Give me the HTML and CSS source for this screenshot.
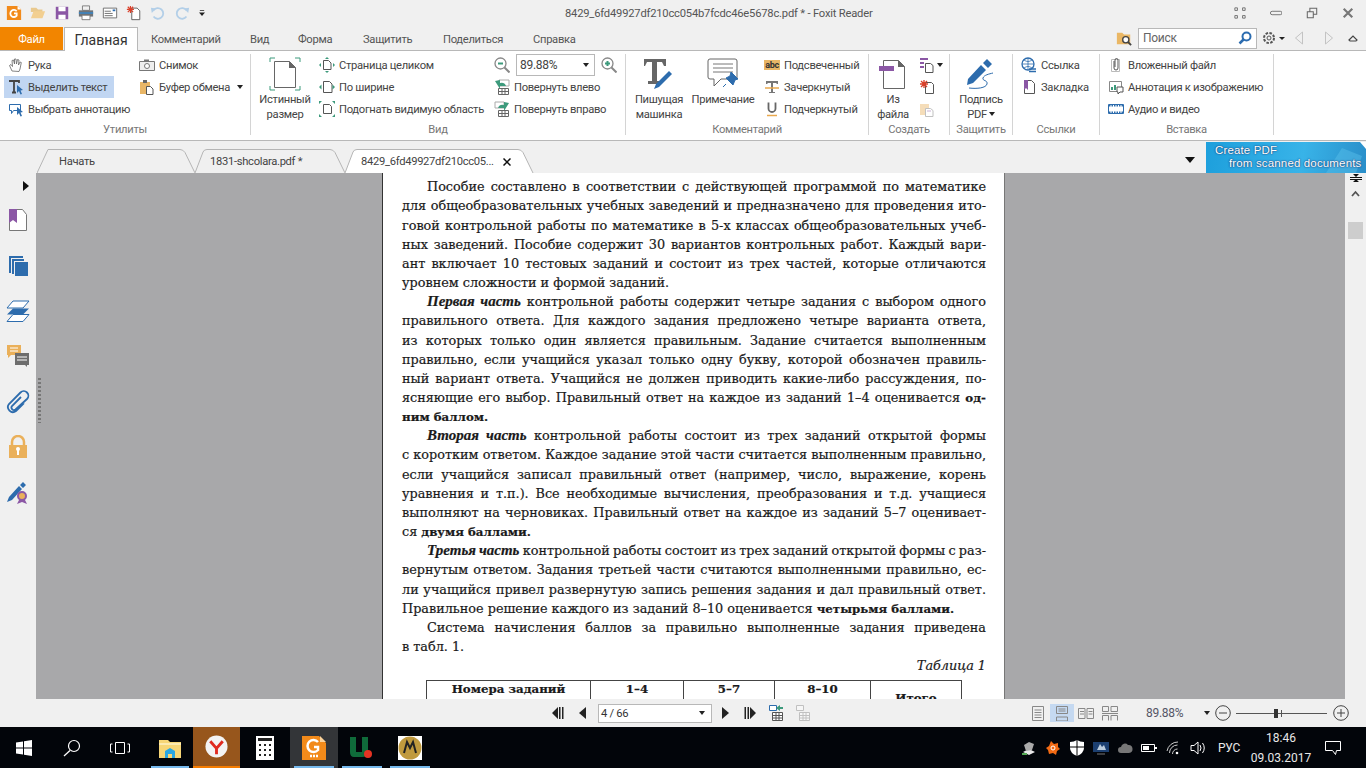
FILE: index.html
```html
<!DOCTYPE html>
<html lang="ru">
<head>
<meta charset="utf-8">
<title>Foxit Reader</title>
<link rel="stylesheet" href="styles.css">
</head>
<body>
<div class="app">
  <header class="titlebar">
    <div class="qat">
      <svg class="qi" viewBox="0 0 18 18"><path d="M1 1h12l4 4v12H1z" fill="#f28a1a"/><path d="M13 1l4 4h-4z" fill="#fff"/><path d="M12 7a4 4 0 1 0 0 5V9.500H9" fill="none" stroke="#fff" stroke-width="2"/></svg>
      <svg class="qi" viewBox="0 0 18 18"><path d="M1 3h6l2 2h5v3H1z" fill="#e9c98e"/><path d="M1 15l3-8h13l-3 8z" fill="#f2cf91"/></svg>
      <svg class="qi" viewBox="0 0 18 18"><path d="M2 2h14v14H2z" fill="#8b57a5"/><path d="M5 2h8v5H5zM5 11h8v5H5z" fill="#fff"/></svg>
      <svg class="qi" viewBox="0 0 18 18"><path d="M5 1h8v5H5z" fill="none" stroke="#777"/><path d="M1 6h16v7H1z" fill="#6f7377"/><path d="M1 8h16v2H1z" fill="#3f83bd"/><path d="M4.500 11.500h9v5h-9z" fill="#fff" stroke="#777"/></svg>
      <svg class="qi" viewBox="0 0 18 18"><path d="M1.500 3.500h15v11h-15z" fill="#fff" stroke="#666"/><path d="M3 7h7M3 9.500h9M3 12h9" stroke="#666"/><path d="M12 5h3v2h-3z" fill="#2f6fb0"/></svg>
      <svg class="qi" viewBox="0 0 18 18"><path d="M6.500 3.500h6l3 3v10h-9z" fill="#fff" stroke="#555"/><path d="M5 1v8M1 5h8M2 2l6 6M8 2L2 8" stroke="#d9412b" stroke-width="1.300"/></svg>
      <svg class="qi" viewBox="0 0 18 18"><path d="M4 6a6 6 0 1 1 0 7" fill="none" stroke="#b3cfe8" stroke-width="2"/><path d="M1 3l6 1-5 5z" fill="#b3cfe8"/></svg>
      <svg class="qi" viewBox="0 0 18 18"><path d="M14 6a6 6 0 1 0 0 7" fill="none" stroke="#b3cfe8" stroke-width="2"/><path d="M17 3l-6 1 5 5z" fill="#b3cfe8"/></svg>
      <svg class="qi-small" viewBox="0 0 7 7"><path d="M1 0h5v1H1zM0 3h7L3.500 7z" fill="#222"/></svg>
    </div>
    <div class="doc-title">8429_6fd49927df210cc054b7fcdc46e5678c.pdf * - Foxit Reader</div>
    <div class="winbtns">
      <svg class="wb" viewBox="0 0 14 14"><path d="M1 1h3v3H1zM10 1h3v3h-3zM1 10h3v3H1zM10 10h3v3h-3z" fill="none" stroke="#666"/></svg>
      <svg class="wb" viewBox="0 0 14 14"><path d="M2.500 5h9.500a1 1 0 0 1 0 4H2.500a1 1 0 0 1 0-4z" fill="none" stroke="#666"/></svg>
      <svg class="wb" viewBox="0 0 14 14"><path d="M1.500 5.500h7v7h-7zM4.500 5V1.500h8v7H9" fill="none" stroke="#666" stroke-width="1.200"/></svg>
      <svg class="wb" viewBox="0 0 14 14"><path d="M2 2l10 10M12 2L2 12" stroke="#777" stroke-width="2.500"/></svg>
    </div>
  </header>

  <nav class="menubar">
    <div class="file-tab">Файл</div>
    <div class="home-tab">Главная</div>
    <div class="menu-item w1">Комментарий</div>
    <div class="menu-item w2">Вид</div>
    <div class="menu-item w3">Форма</div>
    <div class="menu-item w4">Защитить</div>
    <div class="menu-item w5">Поделиться</div>
    <div class="menu-item w6">Справка</div>
    <div class="menu-right">
      <svg class="mi" viewBox="0 0 18 18"><path d="M1 3h6l2 2h7v11H1z" fill="#eab765"/><circle cx="11" cy="11" r="3.500" fill="#fff" stroke="#444" stroke-width="1.500"/><path d="M13.500 13.500l3.500 3.500" stroke="#444" stroke-width="2"/></svg>
      <div class="search"><span>Поиск</span><svg class="search-ic" viewBox="0 0 14 14"><circle cx="8.500" cy="5.500" r="4" fill="none" stroke="#2b6cb0" stroke-width="2"/><path d="M5.500 8.500L1.500 12.500" stroke="#2b6cb0" stroke-width="2.500"/></svg></div>
      <svg class="gear" viewBox="0 0 24 14"><circle cx="7" cy="7" r="5" fill="none" stroke="#555" stroke-dasharray="2.500 1.400" stroke-width="2"/><circle cx="7" cy="7" r="2" fill="none" stroke="#555"/><path d="M17 6h6l-3 3z" fill="#222"/></svg>
      <svg class="arrow-nav" viewBox="0 0 10 14"><path d="M8.500 1L1.500 7l7 6z" fill="none" stroke="#c3c3c3"/></svg>
      <svg class="arrow-nav" viewBox="0 0 10 14"><path d="M1.500 1l7 6-7 6z" fill="none" stroke="#c3c3c3"/></svg>
      <svg class="chev" viewBox="0 0 10 8"><path d="M1 6l4-4 4 4-1 1H2z" fill="none" stroke="#444" stroke-width="1.200"/></svg>
    </div>
  </nav>

  <section class="ribbon">
    <div class="group g-util">
      <div class="group-body">
        <div class="col c-util1">
          <div class="row"><svg class="ic" viewBox="0 0 16 16"><path d="M4 14L1.500 8.500l1.500-1 1.500 2L4 3.500l1.500-.5L6.500 7V2h1.500l.5 5 1-4.500 1.500.5-.5 5 1.500-3 1.300.5L12 12l-1 2.500z" fill="#fff" stroke="#666" stroke-width=".8"/></svg><span>Рука</span></div>
          <div class="row row-on"><svg class="ic" viewBox="0 0 16 16"><path d="M1 2h10v2M6 2v11M4 13.500h4" fill="none" stroke="#444" stroke-width="1.800"/><path d="M9 6l6 5-2.500.5L14 15l-1.500.5-1.500-3.500-2 2z" fill="#2d6cad"/></svg><span>Выделить текст</span></div>
          <div class="row"><svg class="ic" viewBox="0 0 16 16"><path d="M1.500 3.500h11v6h-7l-2 3v-3h-2z" fill="none" stroke="#2d6cad"/><path d="M9 6l6 5-2.500.5L14 15l-1.500.5-1.500-3.500-2 2z" fill="#2d6cad"/></svg><span>Выбрать аннотацию</span></div>
        </div>
        <div class="col">
          <div class="row"><svg class="ic" viewBox="0 0 16 16"><path d="M.5 4.500h15v9H.5z" fill="#eee" stroke="#777"/><path d="M5 2.500h5v2H5z" fill="#777"/><circle cx="8" cy="9" r="2.500" fill="#fff" stroke="#777"/></svg><span>Снимок</span></div>
          <div class="row"><svg class="ic" viewBox="0 0 16 16"><path d="M1 3h10v12H1z" fill="#e9b666"/><path d="M4 1h4v3H4z" fill="#666"/><path d="M7.500 7.500h4l2.500 2.500v5.500H7.500z" fill="#fff" stroke="#555"/></svg><span>Буфер обмена</span><i class="caret caret-gap"></i></div>
        </div>
      </div>
      <div class="group-label">Утилиты</div>
    </div>

    <div class="group g-view">
      <div class="group-body">
        <div class="big b-true">
          <svg class="big-ic" viewBox="0 0 32 34"><path d="M1 5V1h5M26 1h5v4M1 29v4h5M26 33h5v-4" fill="none" stroke="#3d9a7c"/><path d="M5.500 4.500h15l6 6v20h-21z" fill="#fff" stroke="#666"/><path d="M20 4l7 7h-7z" fill="#666"/></svg>
          <span>Истинный</span><span>размер</span>
        </div>
        <div class="col c-fit">
          <div class="row"><svg class="ic" viewBox="0 0 16 16"><path d="M4.500 3.500h5l2.500 2.500v6.500H4.500z" fill="#fff" stroke="#555"/><path d="M8 0l2 2H6zM8 16l-2-2h4zM0 8l2-2v4zM16 8l-2 2V6z" fill="#3d9a7c"/></svg><span>Страница целиком</span></div>
          <div class="row"><svg class="ic" viewBox="0 0 16 16"><path d="M4.500 2.500h6l2.500 2.500v8.500H4.500z" fill="#fff" stroke="#555"/><path d="M0 8l2.500-2.500v5zM16 8l-2.500 2.500v-5z" fill="#3d9a7c"/></svg><span>По ширине</span></div>
          <div class="row"><svg class="ic" viewBox="0 0 16 16"><path d="M4.500 3.500h6l2 2v7h-8z" fill="#fff" stroke="#555"/><path d="M0 0h3L0 3zM16 0h-3l3 3zM0 16h3l-3-3zM16 16h-3l3-3z" fill="#3d9a7c"/></svg><span>Подогнать видимую область</span></div>
        </div>
        <div class="col">
          <div class="row zoomrow">
            <svg class="ic" viewBox="0 0 16 16"><circle cx="6.500" cy="6.500" r="5.500" fill="#fff" stroke="#888" stroke-width="1.300"/><path d="M4 6.500h5" stroke="#3d9a7c" stroke-width="2"/><path d="M10.500 10.500l5 5" stroke="#888" stroke-width="2"/></svg>
            <div class="combo"><span>89.88%</span><i class="caret"></i></div>
            <svg class="ic" viewBox="0 0 16 16"><circle cx="6.500" cy="6.500" r="5.500" fill="#fff" stroke="#888" stroke-width="1.300"/><path d="M4 6.500h5M6.500 4v5" stroke="#3d9a7c" stroke-width="2"/><path d="M10.500 10.500l5 5" stroke="#888" stroke-width="2"/></svg>
          </div>
          <div class="row"><svg class="ic" viewBox="0 0 16 16"><path d="M5 1h10v6H5z" fill="#fff" stroke="#aaa"/><path d="M1 2l5-1v3a5 5 0 0 1 6 3H6v3z" fill="#3d9a7c"/><path d="M4.500 9.500h10v6h-10zM4.500 12.500h10M8 9.500v6M11 9.500v6" fill="#fff" stroke="#666"/></svg><span>Повернуть влево</span></div>
          <div class="row"><svg class="ic" viewBox="0 0 16 16"><path d="M1 1h9v6H1z" fill="#fff" stroke="#aaa"/><path d="M15 2l-5-1v3a5 5 0 0 0-6 3h6v3z" fill="#3d9a7c"/><path d="M4.500 9.500h10v6h-10zM4.500 12.500h10M8 9.500v6M11 9.500v6" fill="#fff" stroke="#666"/></svg><span>Повернуть вправо</span></div>
        </div>
      </div>
      <div class="group-label">Вид</div>
    </div>

    <div class="group g-comm">
      <div class="group-body">
        <div class="big b-type">
          <svg class="big-ic" viewBox="0 0 32 34"><path d="M1 2h22v7h-2l-2-4h-5v19h4v3H5v-3h4V5H4L2 9H1z" fill="#666"/><path d="M11 32l2-5L26 14l3 3-13 13z" fill="#2d6cad"/></svg>
          <span>Пишущая</span><span>машинка</span>
        </div>
        <div class="big b-note">
          <svg class="big-ic" viewBox="0 0 32 34"><path d="M3 2h25a2 2 0 0 1 2 2v18h-16l-7 7v-7H3a2 2 0 0 1-2-2V4a2 2 0 0 1 2-2z" fill="#fff" stroke="#666"/><path d="M6 7h20M6 11h20M6 15h20" stroke="#777"/><path d="M24 15l7 7-3 1-2 5-7-7 4-2zM19 27l-3 3" fill="#2d6cad" stroke="#2d6cad"/></svg>
          <span>Примечание</span>
        </div>
        <div class="col">
          <div class="row"><span class="abc">abc</span><span>Подсвеченный</span></div>
          <div class="row"><svg class="ic" viewBox="0 0 16 16"><path d="M2 2h12v3h-1l-1-1H9v9h2v1H5v-1h2V4H4L3 5H2z" fill="#777"/><path d="M1 9h14" stroke="#e9a84e" stroke-width="1.500"/></svg><span>Зачеркнутый</span></div>
          <div class="row"><svg class="ic" viewBox="0 0 16 16"><path d="M4.500 1.500v6a3.500 3.500 0 0 0 7 0v-6" fill="none" stroke="#666" stroke-width="1.800"/><path d="M3 14.500h10" stroke="#e9a84e" stroke-width="1.500"/></svg><span>Подчеркнутый</span></div>
        </div>
      </div>
      <div class="group-label">Комментарий</div>
    </div>

    <div class="group g-make">
      <div class="group-body">
        <div class="big b-file">
          <svg class="big-ic" viewBox="0 0 32 34"><path d="M6.500 3.500h15l6 6v22h-21z" fill="#fff" stroke="#666"/><path d="M21 3l7 7h-7z" fill="#666"/><path d="M2 9h15v5H2z" fill="#8b57a5"/></svg>
          <span>Из</span><span>файла</span>
        </div>
        <div class="col c-make">
          <div class="row"><svg class="ic" viewBox="0 0 16 16"><path d="M6.500 6.500h5l2.500 2v7H6.500z" fill="#fff" stroke="#555"/><path d="M1 1h8v2H1zM1 5h4v2H1zM1 9h4v2H1z" fill="#8b57a5"/></svg><i class="caret caret-small"></i></div>
          <div class="row"><svg class="ic" viewBox="0 0 16 16"><path d="M6.500 3.500h6l2 2v9h-8z" fill="#fff" stroke="#555"/><path d="M5 1v8M1 5h8M2 2l6 6M8 2L2 8" stroke="#d9412b" stroke-width="1.300"/></svg></div>
          <div class="row"><svg class="ic faded" viewBox="0 0 16 16"><path d="M1 3h9v11H1z" fill="#e9b666"/><path d="M6.500 7.500h5l2.500 2v6H6.500z" fill="#fff" stroke="#777"/><path d="M8 10h4" stroke="#8b57a5"/></svg></div>
        </div>
      </div>
      <div class="group-label">Создать</div>
    </div>

    <div class="group g-prot">
      <div class="group-body">
        <div class="big b-sign">
          <svg class="big-ic" viewBox="0 0 32 34"><path d="M3 22L16 8l5 5L8 26l-6 2zM18 6l4-4 5 5-4 4z" fill="#2d6cad"/><path d="M4 31c8 1 17 0 18-4s-5-3-4-6 6-4 10-5" fill="none" stroke="#2d6cad"/></svg>
          <span>Подпись</span><span>PDF<i class="caret caret-in"></i></span>
        </div>
      </div>
      <div class="group-label">Защитить</div>
    </div>

    <div class="group g-link">
      <div class="group-body">
        <div class="col c-pad">
          <div class="row"><svg class="ic" viewBox="0 0 16 16"><circle cx="7" cy="7" r="6" fill="#fff" stroke="#2d6cad" stroke-width="1.300"/><path d="M1 7h12M7 1v12M3 3c3 2 5 2 8 0M3 11c3-2 5-2 8 0" fill="none" stroke="#2d6cad" stroke-width=".8"/><path d="M8 12h7M8 14.500h7" stroke="#2d6cad" stroke-width="1.500"/></svg><span>Ссылка</span></div>
          <div class="row"><svg class="ic" viewBox="0 0 16 16"><path d="M3.500 1.500h7l3 3v10h-10z" fill="#fff" stroke="#555"/><path d="M3 1h4v10l-2-2-2 2z" fill="#8b57a5"/></svg><span>Закладка</span></div>
        </div>
      </div>
      <div class="group-label">Ссылки</div>
    </div>

    <div class="group g-ins">
      <div class="group-body">
        <div class="col c-pad">
          <div class="row"><svg class="ic" viewBox="0 0 16 16"><path d="M3.500 2.500h8v12h-8z" fill="#fff" stroke="#bbb"/><path d="M6 4v7a2 2 0 0 0 4 0V3a1.500 1.500 0 0 0-3 0v7" fill="none" stroke="#555"/></svg><span>Вложенный файл</span></div>
          <div class="row"><svg class="ic" viewBox="0 0 16 16"><path d="M1.500 2.500h12v10h-12z" fill="#fff" stroke="#888"/><path d="M3 11V8h2v3zM6 11V6h2v5z" fill="#3d9a7c"/><path d="M9 8h6v5h-3l-2 2v-2H9z" fill="#fff" stroke="#555"/></svg><span>Аннотация к изображению</span></div>
          <div class="row"><svg class="ic" viewBox="0 0 16 16"><path d="M.5 3.500h15v9H.5z" fill="#fff" stroke="#2d6cad"/><path d="M1 4.500h14M1 11.500h14" stroke="#2d6cad" stroke-width="2" stroke-dasharray="1.500 1"/></svg><span>Аудио и видео</span></div>
        </div>
      </div>
      <div class="group-label">Вставка</div>
    </div>
  </section>

  <div class="tabstrip">
    <div class="doc-tab t1">
      <svg class="tab-shape" viewBox="0 0 158 24"><path d="M0 24L11 .5h132q3 0 5 3L158 24" fill="#f0f0f0" stroke="#b5b5b5"/></svg>
      <span class="tab-text">Начать</span>
    </div>
    <div class="doc-tab t2">
      <svg class="tab-shape" viewBox="0 0 150 24"><path d="M0 24L8 3q1-2.500 4-2.500h123q3 0 5 3L150 24" fill="#f0f0f0" stroke="#b5b5b5"/></svg>
      <span class="tab-text">1831-shcolara.pdf *</span>
    </div>
    <div class="doc-tab t3">
      <svg class="tab-shape" viewBox="0 0 190 24"><path d="M0 24L8 3q1-2.500 4-2.500h161q3 0 5 3L188 24" fill="#fff" stroke="#b5b5b5"/></svg>
      <span class="tab-text">8429_6fd49927df210cc05...</span>
      <svg class="tab-x" viewBox="0 0 8 8"><path d="M.5.5l7 7M7.500.5l-7 7" stroke="#111" stroke-width="1.500"/></svg>
    </div>
    <svg class="strip-caret" viewBox="0 0 10 6"><path d="M0 0h10L5 6z" fill="#111"/></svg>
    <div class="ad">
      <svg class="ad-art" viewBox="0 0 160 31"><path d="M120 31L136 6l20 8-6 17z" fill="#5cc0ea" opacity=".45"/><path d="M154 0h6v7z" fill="#fff"/></svg>
      <span class="ad-a">Create PDF</span>
      <span class="ad-b">from scanned documents</span>
    </div>
  </div>

  <main class="workspace">
    <aside class="sidebar">
      <svg class="side-arrow" viewBox="0 0 6 10"><path d="M0 0l6 5-6 5z" fill="#111"/></svg>
      <svg class="side-ic" viewBox="0 0 20 24"><path d="M1.500 1.500h13l4 5v16h-17z" fill="#fff" stroke="#777"/><path d="M1 1h8v14l-4-3-4 3z" fill="#8b57a5"/></svg>
      <svg class="side-ic" viewBox="0 0 20 24"><path d="M1 3h14v2H3v15H1z" fill="#2d6cad"/><path d="M4 6h12v2H6v13H4z" fill="#2d6cad"/><path d="M7 9h13v14H7z" fill="#2d6cad"/></svg>
      <svg class="side-ic" viewBox="0 0 24 24"><path d="M7 2h16l-6 7H1z" fill="#fff" stroke="#2d6cad"/><path d="M7 9.500h16l-6 6H1z" fill="#2d6cad"/><path d="M7 15.500h16l-6 7H1z" fill="#fff" stroke="#2d6cad"/></svg>
      <svg class="side-ic" viewBox="0 0 24 24"><path d="M1 1h14v10H5l-3 3v-3H1z" fill="#eab05a"/><path d="M4 4h8M4 7h8" stroke="#fff"/><path d="M9 9h14v12h-2v2l-2-2H9z" fill="#6d6d6d"/><path d="M11 13h10M11 16h10" stroke="#fff"/></svg>
      <svg class="side-ic" viewBox="0 0 24 24"><path d="M15 7L6 16a2.500 2.500 0 0 0 3.500 3.500L21 9a4.500 4.500 0 0 0-6.500-6.500L3 14a5 5 0 0 0 7 7l8-8" fill="none" stroke="#2d6cad" stroke-width="1.800"/></svg>
      <svg class="side-ic" viewBox="0 0 20 24"><path d="M4 11V7a6 6 0 0 1 12 0v4" fill="none" stroke="#eab05a" stroke-width="2.500"/><path d="M1 10h18v13H1z" fill="#eab05a"/><path d="M9 14h2v6H9z" fill="#fff"/><circle cx="10" cy="14" r="2" fill="#fff"/></svg>
      <svg class="side-ic" viewBox="0 0 24 24"><path d="M1 21l2-5L13 5l3 3L6 19zM14 4l3-3 3 3-3 3z" fill="#2d6cad"/><circle cx="16" cy="15" r="4" fill="#eab05a" stroke="#8b57a5" stroke-width="2"/><path d="M13 19l-2 4 5-2 5 2-2-4" fill="#8b57a5"/></svg>
    </aside>
    <div class="viewer">
      <span class="splitter"></span>
      <article class="page">
        <div class="ln ind">Пособие составлено в соответствии с действующей программой по математике</div>
        <div class="ln">для общеобразовательных учебных заведений и предназначено для проведения ито-</div>
        <div class="ln">говой контрольной работы по математике в 5-х классах общеобразовательных учеб-</div>
        <div class="ln">ных заведений. Пособие содержит 30 вариантов контрольных работ. Каждый вари-</div>
        <div class="ln">ант включает 10 тестовых заданий и состоит из трех частей, которые отличаются</div>
        <div class="ln end">уровнем сложности и формой заданий.</div>
        <div class="ln ind"><b class="bi">Первая часть</b> контрольной работы содержит четыре задания с выбором одного</div>
        <div class="ln">правильного ответа. Для каждого задания предложено четыре варианта ответа,</div>
        <div class="ln">из которых только один является правильным. Задание считается выполненным</div>
        <div class="ln">правильно, если учащийся указал только одну букву, которой обозначен правиль-</div>
        <div class="ln">ный вариант ответа. Учащийся не должен приводить какие-либо рассуждения, по-</div>
        <div class="ln">ясняющие его выбор. Правильный ответ на каждое из заданий 1–4 оценивается <b>од-</b></div>
        <div class="ln end"><b>ним баллом.</b></div>
        <div class="ln ind"><b class="bi">Вторая часть</b> контрольной работы состоит из трех заданий открытой формы</div>
        <div class="ln">с коротким ответом. Каждое задание этой части считается выполненным правильно,</div>
        <div class="ln">если учащийся записал правильный ответ (например, число, выражение, корень</div>
        <div class="ln">уравнения и т.п.). Все необходимые вычисления, преобразования и т.д. учащиеся</div>
        <div class="ln">выполняют на черновиках. Правильный ответ на каждое из заданий 5–7 оценивает-</div>
        <div class="ln end">ся <b>двумя баллами.</b></div>
        <div class="ln ind tight"><b class="bi">Третья часть</b> контрольной работы состоит из трех заданий открытой формы с раз-</div>
        <div class="ln">вернутым ответом. Задания третьей части считаются выполненными правильно, ес-</div>
        <div class="ln">ли учащийся привел развернутую запись решения задания и дал правильный ответ.</div>
        <div class="ln end">Правильное решение каждого из заданий 8–10 оценивается <b>четырьмя баллами.</b></div>
        <div class="ln ind">Система начисления баллов за правильно выполненные задания приведена</div>
        <div class="ln end">в табл. 1.</div>
        <div class="ln caption"><i>Таблица 1</i></div>
        <div class="tbl">
          <div class="cell c-a"><b>Номера заданий</b></div>
          <div class="cell c-b"><b>1–4</b></div>
          <div class="cell c-c"><b>5–7</b></div>
          <div class="cell c-d"><b>8–10</b></div>
          <div class="cell c-e"><b>Итого</b></div>
        </div>
      </article>
    </div>
    <div class="vscroll">
      <svg class="vs-split" viewBox="0 0 12 8"><path d="M0 3.500h12M0 5.500h12" stroke="#111"/><path d="M3 0h6L6 3zM3 8h6L6 5z" fill="#111"/></svg>
      <svg class="vs-up" viewBox="0 0 9 7"><path d="M1 6l3.500-4L8 6" fill="none" stroke="#555" stroke-width="1.800"/></svg>
      <div class="vs-thumb"></div>
    </div>
  </main>

  <footer class="statusbar">
    <div class="pager">
      <svg class="pg" viewBox="0 0 12 14"><path d="M0 7l6-6v12zM7 1h1.500v12H7z" fill="#222"/><path d="M10 1h1.500v12H10z" fill="#222"/></svg>
      <svg class="pg" viewBox="0 0 12 14"><path d="M3 7l7-6v12z" fill="#222"/></svg>
      <div class="page-box"><span>4 / 66</span><i class="caret"></i></div>
      <svg class="pg" viewBox="0 0 12 14"><path d="M9 7L2 1v12z" fill="#222"/></svg>
      <svg class="pg" viewBox="0 0 12 14"><path d="M.5 1H2v12H.5zM3.500 1H5v12H3.500zM6 1l6 6-6 6z" fill="#222"/></svg>
      <svg class="pg2" viewBox="0 0 14 16"><path d="M.5.500h7v5h-7z" fill="#fff" stroke="#2d6cad"/><path d="M3.500 7.500h10v8h-10zM3.500 10.500h10M3.500 13h10M7 7.500v8M10 7.500v8" fill="#fff" stroke="#555"/><path d="M7 3l4-3v2h3v2h-3v2z" fill="#3d9a7c"/></svg>
      <svg class="pg2 faded" viewBox="0 0 14 16"><path d="M.5.500h7v5h-7z" fill="#fff" stroke="#888"/><path d="M3.500 7.500h10v8h-10zM3.500 10.500h10M3.500 13h10M7 7.500v8M10 7.500v8" fill="#fff" stroke="#888"/></svg>
    </div>
    <div class="views">
      <div class="view-b"><svg class="vw" viewBox="0 0 12 15"><path d="M.5.500h11v14H.5zM2.500 4h7M2.500 6.500h7M2.500 9h7M2.500 11.500h7" fill="none" stroke="#888"/></svg></div>
      <div class="view-b on"><svg class="vw" viewBox="0 0 12 15"><path d="M.5.500h11v7H.5zM.5 11h11v4H.5zM2.500 3h7M2.500 5h7" fill="none" stroke="#888"/></svg></div>
      <div class="view-b"><svg class="vw w" viewBox="0 0 16 13"><path d="M.5 1.500h6.500v10H.5zM9 1.500h6.500v10H9zM2 4.500h4M2 7h4M10.500 4.500h4M10.500 7h4" fill="none" stroke="#888"/></svg></div>
      <div class="view-b"><svg class="vw w" viewBox="0 0 16 15"><path d="M.5.500h6v5h-6zM9 .5h6.500v5H9zM.5 14.500v-5h6v5M9 14.500v-5h6.500v5M0 7.500h16" fill="none" stroke="#888"/></svg></div>
    </div>
    <div class="zoom-val">89.88%</div>
    <i class="caret zoom-caret"></i>
    <svg class="circ" viewBox="0 0 16 16"><circle cx="8" cy="8" r="7.300" fill="none" stroke="#444"/><path d="M4 8h8" stroke="#444"/></svg>
    <div class="slider"><span class="knob"></span><span class="tick"></span></div>
    <svg class="circ" viewBox="0 0 16 16"><circle cx="8" cy="8" r="7.300" fill="none" stroke="#444"/><path d="M4 8h8M8 4v8" stroke="#444"/></svg>
  </footer>

  <div class="taskbar">
    <div class="tb tb-sys"><svg class="tb-win" viewBox="0 0 16 16"><path d="M0 2.500l7-1V7.500H0zM8 1.300l8-1.300V7.500H8zM0 8.500h7v6l-7-1zM8 8.500h8V16l-8-1.300z" fill="#fff"/></svg></div>
    <div class="tb tb-sys"><svg class="tb-ic" viewBox="0 0 18 18"><circle cx="11" cy="7" r="5.500" fill="none" stroke="#fff" stroke-width="1.200"/><path d="M7 11.500L1 17" stroke="#fff" stroke-width="1.300"/></svg></div>
    <div class="tb tb-sys"><svg class="tb-tv" viewBox="0 0 20 12"><path d="M5.500.5h9v11h-9zM2.500 2H.5v8h2M17.500 2h2v8h-2" fill="none" stroke="#fff"/></svg></div>
    <div class="tb tb-gap tb-run"><svg class="tb-app" viewBox="0 0 22 20"><path d="M0 2h9l2 2h11v16H0z" fill="#f6d676"/><path d="M0 5h22v2H0z" fill="#fbeab0"/><path d="M6 20v-7l5-3 5 3v7h-3v-4H9v4z" fill="#2aa7e2"/></svg></div>
    <div class="tb tb-ya"><svg class="tb-app" viewBox="0 0 24 24"><circle cx="12" cy="12" r="11.500" fill="#f3f3f3"/><path d="M5.500 6.500L12 14v6M18.500 6.500L12 14" fill="none" stroke="#e02a20" stroke-width="3"/></svg></div>
    <div class="tb tb-calc"><svg class="tb-app" viewBox="0 0 18 24"><path d="M0 0h18v24H0z" fill="#fff"/><path d="M2 2h14v3H2z" fill="#222"/><path d="M3 8h2v2H3zM8 8h2v2H8zM13 8h2v2h-2zM3 13h2v2H3zM8 13h2v2H8zM13 13h2v2h-2zM3 18h2v2H3zM8 18h2v2H8zM13 18h2v2h-2z" fill="#222"/></svg></div>
    <div class="tb tb-foxit tb-run"><svg class="tb-app big24" viewBox="0 0 24 24"><path d="M0 0h17l7 7v17H0z" fill="#f28a1a"/><path d="M18 0l6 6h-6z" fill="#fbd29a"/><path d="M16 6a6 6 0 1 0 0 8v-3h-4" fill="none" stroke="#fff" stroke-width="2.500"/><path d="M8 20h8" stroke="#fff" stroke-dasharray="2 1" stroke-width="2.500"/></svg></div>
    <div class="tb tb-run"><svg class="tb-app big24" viewBox="0 0 24 22"><path d="M0 0h6v15h6V0h6v14q0 6-6 6H4q-4 0-4-5z" fill="#0f6b3a"/><circle cx="18" cy="17" r="4" fill="#e53323"/></svg></div>
    <div class="tb tb-run"><svg class="tb-app big24" viewBox="0 0 24 24"><path d="M0 0h24v24H0z" fill="#fff"/><circle cx="12" cy="12" r="11.500" fill="#c09a3e"/><path d="M6 17l3-11 3 6 3-6 3 11" fill="none" stroke="#222" stroke-width="2"/></svg></div>
    <div class="tray">
      <svg class="tr" viewBox="0 0 16 16"><path d="M2 12l6-3 6 3-6 3z" fill="#e9e9e9"/><path d="M3 5l5-3 5 2-2 6-6 1z" fill="#aaa"/><path d="M1 14h5" stroke="#5a5" stroke-width="2"/></svg>
      <svg class="tr" viewBox="0 0 16 16"><path d="M6 1l3 3 4-1v4l2 2-3 2-1 4-3-2-4 1-1-4-2-2 3-2z" fill="#f26a13"/><circle cx="8" cy="8" r="2" fill="none" stroke="#fff"/></svg>
      <svg class="tr" viewBox="0 0 16 16"><path d="M8 0q3 2 7 2v6q0 5-7 8-7-3-7-8V2q4 0 7-2z" fill="#fff"/><path d="M8 0v16M1 7h14" stroke="#000"/></svg>
      <svg class="tr" viewBox="0 0 16 16"><path d="M0 2h16v10H0z" fill="#1c3f70"/><path d="M4 10l3-6 2 3 2-2 2 5z" fill="#bcd"/><path d="M4 14h8" stroke="#777"/></svg>
      <svg class="tr" viewBox="0 0 16 16"><path d="M4 13a3 3 0 0 1 0-6 4 4 0 0 1 7-2 4 4 0 0 1 1 8z" fill="#777"/></svg>
      <svg class="tr" viewBox="0 0 16 16"><path d="M.5 4.500h13v7H.5z" fill="none" stroke="#fff"/><path d="M2 6h6v4H2zM14 7h2v2h-2z" fill="#fff"/></svg>
      <svg class="tr" viewBox="0 0 16 16"><path d="M1 11a11 11 0 0 1 11-9M3.500 13a8 8 0 0 1 8-8M6.500 14a5 5 0 0 1 5-5" fill="none" stroke="#ccc"/><circle cx="11" cy="13" r="1.300" fill="#fff"/></svg>
      <svg class="tr" viewBox="0 0 16 16"><path d="M1 5.500h3L8 2v12l-4-3.500H1z" fill="none" stroke="#fff"/><path d="M10 5q2 3 0 6M12.500 3q3.500 5 0 10" fill="none" stroke="#fff"/></svg>
      <span class="lang">РУС</span>
      <div class="clock"><span>18:46</span><span>09.03.2017</span></div>
      <svg class="notif" viewBox="0 0 16 16"><path d="M.5 1.500h15v9h-4l-1 4-3-4h-7z" fill="none" stroke="#fff"/></svg>
    </div>
  </div>
</div>
</body>
</html>
```

FILE: styles.css
```css
* { box-sizing: border-box; }
html, body { margin: 0; height: 100%; overflow: hidden; }
body { font-family: Roboto, "Liberation Sans", sans-serif; font-size: 11.200px; letter-spacing: -.3px; color: #444; background: #f0f0f0; }
svg { display: block; flex: none; }
.app { width: 1366px; height: 768px; display: flex; flex-direction: column; overflow: hidden; }

.titlebar { height: 27px; display: flex; align-items: center; background: #f0f0f0; position: relative; }
.qat { display: flex; align-items: center; padding-left: 6px; }
.qi { width: 16px; height: 16px; margin-right: 8px; }
.qi-small { width: 6px; height: 6px; margin-left: 1px; }
.doc-title { position: absolute; left: 565px; top: 7px; letter-spacing: -.2px; color: #555; white-space: nowrap; }
.winbtns { margin-left: auto; display: flex; align-items: center; padding-right: 12px; gap: 24px; }
.wb { width: 12px; height: 12px; }

.menubar { height: 24px; display: flex; align-items: stretch; background: #f0f0f0; border-bottom: 1px solid #b8b8b8; }
.file-tab { width: 63px; padding-top: 2px; background: #f28500; color: #fff; display: flex; align-items: center; justify-content: center; }
.home-tab { width: 74px; padding-top: 1px; margin: 0 0 -1px 1px; background: #fff; border: 1px solid #b8b8b8; border-bottom: 0; display: flex; align-items: center; justify-content: center; font-size: 14px; letter-spacing: 0; color: #333; }
.menu-item { display: flex; align-items: center; padding-top: 2px; color: #555; white-space: nowrap; }
.w1 { margin-left: 13px; width: 99px; }
.w2 { width: 48px; }
.w3 { width: 65px; }
.w4 { width: 80px; }
.w5 { width: 90px; }
.w6 { width: 60px; }
.menu-right { margin-left: auto; display: flex; align-items: center; padding-right: 8px; }
.mi { width: 16px; height: 16px; margin-right: 6px; }
.search { width: 119px; height: 21px; background: #fff; border: 1px solid #b8b8b8; display: flex; align-items: center; justify-content: space-between; padding: 0 4px; font-size: 12px; color: #666; }
.search-ic { width: 14px; height: 14px; }
.gear { width: 24px; height: 14px; margin: 0 8px 0 5px; }
.arrow-nav { width: 10px; height: 14px; margin-right: 20px; }
.chev { width: 10px; height: 8px; margin-left: -6px; }

.ribbon { height: 90px; display: flex; align-items: flex-start; background: #fff; border-bottom: 1px solid #b8b8b8; }
.group { height: 81px; margin-top: 3px; border-right: 1px solid #d4d4d4; display: flex; flex-direction: column; flex: none; }
.group-body { display: flex; align-items: flex-start; height: 69px; flex: none; }
.group-label { height: 12px; text-align: center; line-height: 14px; color: #777; }
.g-util { width: 251px; }
.g-view { width: 375px; }
.g-comm { width: 243px; }
.g-make { width: 81px; }
.g-prot { width: 63px; }
.g-link { width: 87px; }
.g-ins { width: 174px; }
.col { display: flex; flex-direction: column; }
.c-util1 { width: 139px; }
.c-fit { width: 175px; }
.c-make { margin-left: 2px; }
.c-pad { padding-left: 8px; }
.row { height: 22px; display: flex; align-items: center; white-space: nowrap; color: #444; }
.row > span { margin-left: 4px; padding-top: 1px; }
.row-on { background: #c1d6f2; width: 110px; }
.c-util1 .row { margin-left: 8px; }
.c-util1 .row-on { margin-left: 4px; padding-left: 4px; }
.ic { width: 16px; height: 16px; }
.caret { display: inline-block; width: 0; height: 0; border: 3px solid transparent; border-top: 4px solid #222; border-bottom: 0; flex: none; }
.caret-gap { margin-left: 7px; }
.caret-small { margin-left: 2px; }
.caret-in { margin: 0 0 2px 2px; }
.zoomrow { gap: 6px; }
.combo { width: 79px; height: 22px; border: 1px solid #b8b8b8; display: flex; align-items: center; justify-content: space-between; padding: 0 5px 0 3px; font-size: 12px; color: #444; }
.big { display: flex; flex-direction: column; align-items: center; line-height: 15px; color: #444; flex: none; padding-top: 3px; }
.big-ic { width: 32px; height: 34px; margin-bottom: 1px; }
.b-true { width: 68px; }
.b-type { width: 66px; }
.b-note { width: 62px; margin-right: 10px; }
.b-file { width: 48px; }
.b-sign { width: 62px; }
.row > .abc { width: 16px; height: 10px; padding-top: 0; background: #e9b666; font-size: 9px; font-weight: 700; line-height: 10px; text-align: center; color: #333; margin-left: 0; }
.faded { opacity: .45; }

.tabstrip { height: 32px; display: flex; align-items: flex-end; background: #f0f0f0; padding-left: 37px; }
.doc-tab { position: relative; height: 24px; display: flex; align-items: center; padding-top: 2px; }
.tab-shape { position: absolute; left: 0; top: 0; width: 100%; height: 24px; }
.tab-text { position: relative; color: #444; white-space: nowrap; }
.t1 { width: 158px; padding-left: 22px; }
.t2 { width: 150px; padding-left: 15px; }
.t3 { width: 190px; padding-left: 16px; }
.tab-x { position: relative; width: 8px; height: 8px; margin-left: 9px; }
.strip-caret { width: 10px; height: 6px; margin: 0 0 10px auto; }
.ad { position: relative; width: 160px; height: 31px; margin-left: 11px; background: linear-gradient(100deg, #1d9fdc, #38b3e8 60%, #2a8ec9); color: #fff; display: flex; flex-direction: column; font-family: "Liberation Sans", sans-serif; font-size: 11.500px; letter-spacing: .15px; line-height: 13px; padding: 2px 0 0 9px; text-shadow: 0 0 2px #1b3f78, 0 0 1px #1b3f78; white-space: nowrap; }
.ad-art { position: absolute; left: 0; top: 0; width: 160px; height: 31px; }
.ad-a, .ad-b { position: relative; }
.ad-b { padding-left: 14px; }

.workspace { height: 527px; display: flex; overflow: hidden; }
.sidebar { width: 36px; flex: none; background: #f0f0f0; display: flex; flex-direction: column; align-items: center; padding-top: 8px; }
.side-arrow { width: 6px; height: 10px; margin: 0 0 17px 16px; }
.side-ic { width: 24px; height: 24px; margin-bottom: 21.500px; }
.viewer { flex: 1; background: #a8a8aa; position: relative; padding-left: 346px; overflow: hidden; }
.splitter { position: absolute; left: 2px; top: 205px; width: 3px; height: 45px; background: repeating-linear-gradient(#777 0 2px, transparent 2px 4px); }
.page { width: 623px; height: 600px; background: #fff; border-left: 1px solid #333; border-right: 1px solid #777; padding: 4.500px 18px 0 19px; font-family: "DejaVu Serif", "Liberation Serif", serif; font-size: 12.800px; letter-spacing: 0; line-height: 19.170px; color: #1a1a1a; -webkit-text-stroke: .2px #1a1a1a; }
.ln { height: 19.170px; text-align: justify; text-align-last: justify; white-space: nowrap; }
.ind { padding-left: 25px; }
.tight { word-spacing: -1px; }
.end { text-align-last: left; }
.caption { text-align-last: right; }
.page b { font-size: 11.800px; }
.page b.bi { font-style: italic; font-family: "Liberation Serif", serif; font-size: 15px; }
.tbl { margin: 5px 24px 0 24px; height: 60px; border: 1px solid #444; display: flex; text-align: center; line-height: 16px; }
.cell { border-right: 1px solid #444; }
.c-a { width: 164px; }
.c-b { width: 93px; }
.c-c { width: 91px; }
.c-d { width: 96px; }
.c-e { flex: 1; border-right: 0; padding-top: 9px; }
.vscroll { width: 21px; flex: none; background: #f0f0f0; display: flex; flex-direction: column; align-items: center; padding-top: 1px; }
.vs-split { width: 12px; height: 8px; margin-bottom: 8px; }
.vs-up { width: 9px; height: 7px; margin-bottom: 25px; }
.vs-thumb { width: 15px; height: 17px; background: #cdcdcd; }

.statusbar { height: 28px; display: flex; align-items: center; background: #f0f0f0; }
.pager { display: flex; align-items: center; margin-left: 552px; width: 474px; }
.pg { width: 12px; height: 14px; margin-right: 12px; }
.page-box { width: 114px; height: 19px; margin: 0 8px 0 -2px; border: 1px solid #b8b8b8; background: #fff; display: flex; align-items: center; justify-content: space-between; padding: 0 6px 0 2px; color: #333; }
.pg2 { width: 16px; height: 16px; margin-right: 11px; }
.views { display: flex; align-items: center; }
.view-b { width: 24px; height: 18px; display: flex; align-items: center; justify-content: center; }
.view-b.on { background: #c5d9f1; }
.vw { width: 12px; height: 15px; }
.vw.w { width: 16px; height: 15px; }
.zoom-val { width: 58px; margin-left: 24px; color: #556; font-size: 12px; }
.circ { width: 16px; height: 16px; }
.caret.zoom-caret { margin-right: 5px; }
.slider { width: 91px; height: 1px; background: #555; margin: 0 6px 0 5px; position: relative; }
.knob { position: absolute; left: 38px; top: -4px; width: 4px; height: 9px; background: #333; }
.tick { position: absolute; left: 45px; top: -3px; width: 1px; height: 7px; background: #555; }

.taskbar { height: 41px; flex: none; display: flex; background: #02050a; }
.tb { width: 48px; display: flex; align-items: center; justify-content: center; position: relative; }
.tb-gap { margin-left: 3px; width: 46px; }
.tb-ya { width: 47px; background: #97561c; border-bottom: 2px solid #f57c00; }
.tb-calc { width: 50px; }
.tb-foxit { background: #333538; }
.tb-run::after { content: ""; position: absolute; left: 4px; right: 4px; bottom: 0; height: 2px; background: #76b9ed; }
.tb-ya .tb-app { width: 23px; height: 23px; }
.tb-win { width: 16px; height: 16px; }
.tb-ic { width: 18px; height: 18px; }
.tb-tv { width: 20px; height: 12px; }
.tb-app { width: 22px; height: 20px; }
.tb-calc .tb-app { width: 18px; height: 24px; }
.big24 { width: 24px; height: 24px; }
.tray { margin-left: auto; display: flex; align-items: center; color: #e8e8e8; }
.tr { width: 16px; height: 16px; margin-right: 8.200px; }
.lang { width: 30px; text-align: center; font-size: 12px; }
.clock { width: 72px; margin-left: 1px; display: flex; flex-direction: column; align-items: center; font-size: 12px; letter-spacing: 0; line-height: 20px; }
.notif { width: 16px; height: 16px; margin: 0 25px 0 8px; }
```
